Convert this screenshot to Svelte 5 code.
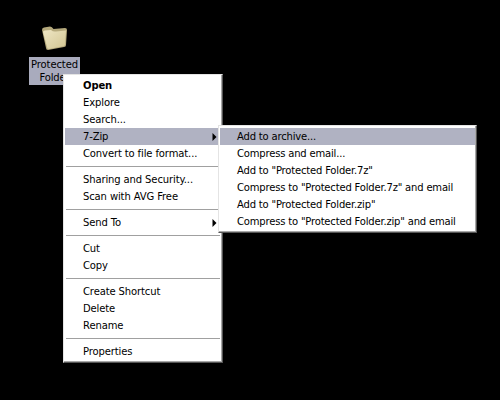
<script>
  const mainMenu = [
    { label: "Open", bold: true },
    { label: "Explore" },
    { label: "Search..." },
    { label: "7-Zip", arrow: true, active: true },
    { label: "Convert to file format..." },
    { sep: true },
    { label: "Sharing and Security..." },
    { label: "Scan with AVG Free" },
    { sep: true },
    { label: "Send To", arrow: true },
    { sep: true },
    { label: "Cut" },
    { label: "Copy" },
    { sep: true },
    { label: "Create Shortcut" },
    { label: "Delete" },
    { label: "Rename" },
    { sep: true },
    { label: "Properties" }
  ];

  const zipMenu = [
    { label: "Add to archive...", active: true },
    { label: "Compress and email..." },
    { label: 'Add to "Protected Folder.7z"' },
    { label: 'Compress to "Protected Folder.7z" and email' },
    { label: 'Add to "Protected Folder.zip"' },
    { label: 'Compress to "Protected Folder.zip" and email' }
  ];
</script>

{#snippet rows(items)}
  {#each items as item}
    {#if item.sep}
      <div class="sep"></div>
    {:else}
      <div class="row" class:active={item.active} class:bold={item.bold}>
        <span>{item.label}</span>
        {#if item.arrow}
          <svg class="arrow" width="5" height="8" viewBox="0 0 5 8"><path d="M0.5 0 L4.5 4 L0.5 8 Z" /></svg>
        {/if}
      </div>
    {/if}
  {/each}
{/snippet}

<div class="desktop">
  <div class="icon">
    <svg width="27" height="27" viewBox="0 0 27 27">
      <defs>
        <linearGradient id="fold" x1="0" y1="0" x2="1" y2="1">
          <stop offset="0" stop-color="#eee6c4" />
          <stop offset="1" stop-color="#d2c592" />
        </linearGradient>
      </defs>
      <!-- back panel with the tab on the left -->
      <path d="M1 6 Q1 3.5 3 3.5 L9 2.5 Q11 2.5 12.5 5 L24 4 Q26 4 26 6 L25 21 Q25 23 23 23 L7 26 Q5 26 5 24 Z" fill="#b5a97c" />
      <path d="M2 8 Q2 6.5 4 6.5 L10 6 Q12 8 15 7.5 L25 6.5 L24 20.5 Q24 22 22 22.3 L8 25 Q6 25 6 23 Z" fill="url(#fold)" />
    </svg>
    <div class="caption">Protected Folder</div>
  </div>

  <div class="menu main">
    {@render rows(mainMenu)}
  </div>
  <div class="menu sub">
    {@render rows(zipMenu)}
  </div>
</div>

<style>
  :global(body) {
    margin: 0;
    background: #000;
  }

  .desktop {
    position: relative;
    width: 500px;
    height: 400px;
    background: #000;
    overflow: hidden;
    font-family: "DejaVu Sans", Verdana, sans-serif;
    font-size: 10px;
    letter-spacing: -0.12px;
    color: #000;
  }

  .icon {
    position: absolute;
    left: 29px;
    top: 24px;
    width: 51px;
    display: flex;
    flex-direction: column;
    align-items: center;
    gap: 6px;
  }

  .caption {
    width: 51px;
    height: 28px;
    background: #a9abbd;
    color: #000;
    text-align: center;
    line-height: 13px;
    padding-top: 1px;
    box-sizing: border-box;
  }

  .menu {
    position: absolute;
    box-sizing: border-box;
    background: #fff;
    border: 1px solid;
    border-color: #e4e4e4 #555 #555 #e4e4e4;
    box-shadow: inset -1px -1px 0 #a8a8a8;
    padding: 2px 1px;
  }

  .main {
    left: 63px;
    top: 74px;
    width: 160px;
  }

  .main .row {
    padding-left: 18px;
  }

  .sub {
    left: 218px;
    top: 125px;
    width: 259px;
    letter-spacing: -0.18px;
  }

  .row {
    height: 17px;
    line-height: 17px;
    padding-left: 17px;
    padding-right: 4px;
    display: flex;
    align-items: center;
    justify-content: space-between;
    white-space: nowrap;
  }

  .bold {
    font-weight: bold;
  }

  .active {
    background: #b0b2c2;
  }

  .sep {
    height: 1px;
    background: #a0a0a0;
    margin: 4px 1px;
  }

  .arrow {
    fill: #000;
  }
</style>
